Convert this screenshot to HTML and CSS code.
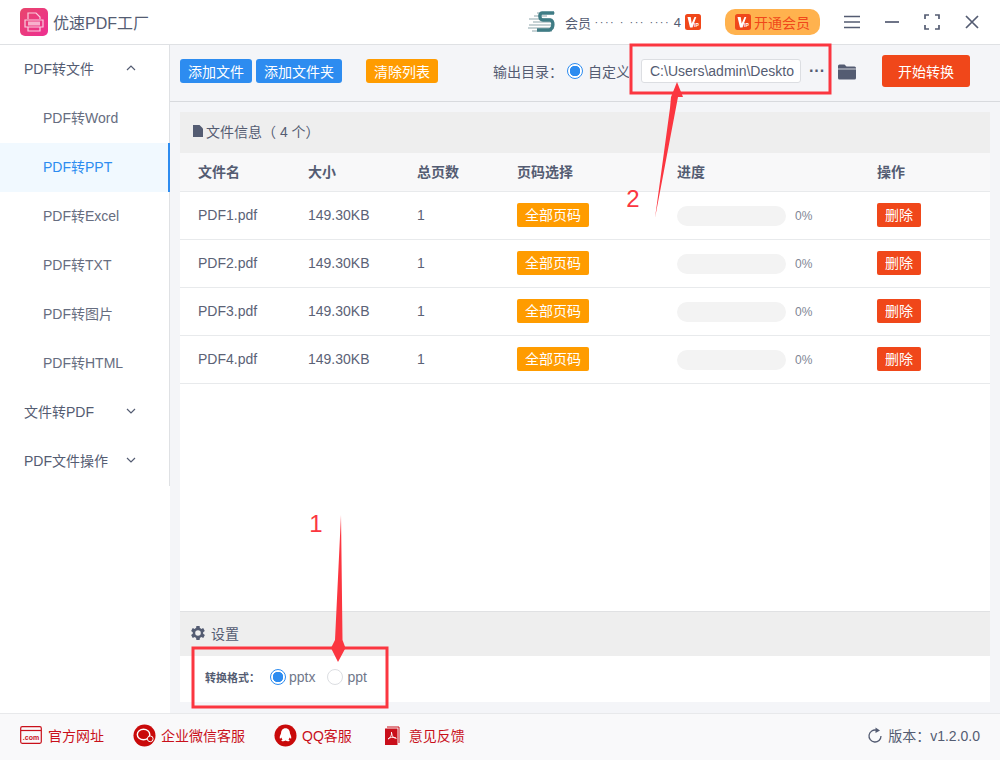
FILE: index.html
```html
<!DOCTYPE html>
<html lang="zh">
<head>
<meta charset="utf-8">
<title>优速PDF工厂</title>
<link rel="stylesheet" href="styles.css">
</head>
<body>
<div class="app">
  <header class="titlebar">
    <div class="brand">
      <svg class="logo" viewBox="0 0 28 28"><defs><linearGradient id="lg" x1="0" y1="0" x2="1" y2="1"><stop offset="0" stop-color="#e8456c"/><stop offset="1" stop-color="#ee2f92"/></linearGradient></defs><rect width="28" height="28" rx="5" fill="url(#lg)"/><path d="M8 11V5h8l4 4v2M5 12h18v7H5zM8 19v4h12v-4" fill="none" stroke="#fff" stroke-opacity=".75" stroke-width="1.2"/><rect x="8" y="13.5" width="12" height="4" fill="#fff" fill-opacity=".6"/></svg>
      <span class="brand-name">优速PDF工厂</span>
    </div>
    <div class="title-right">
      <svg class="avatar" viewBox="0 0 30 24"><path d="M10 3h18M7 6h13M2 9h22M6 12h20M2 15h24M1 18h26M5 21h20" stroke="#b4c4c8" stroke-width="1.6"/><path d="M27 3H15c-3 0-3 7 1 7h7c4 0 4 9-1 10H10" fill="none" stroke="#3f7c85" stroke-width="3.4"/></svg>
      <span class="member"><span>会员</span><span class="member-mask">···· · ··· ····</span><span>4</span></span>
      <svg class="vip-small" viewBox="0 0 16 16"><rect width="16" height="16" rx="2.5" fill="#f0471a"/><path d="M2.500 3h3.200l1 6.500L9.500 3h1.800L7.500 13.500H5z" fill="#fff"/><text x="9" y="13" class="vip-ip">IP</text></svg>
      <button class="vip-btn"><svg class="vip-small" viewBox="0 0 16 16"><rect width="16" height="16" rx="2.5" fill="#f0471a"/><path d="M2.500 3h3.200l1 6.500L9.500 3h1.800L7.500 13.500H5z" fill="#fff"/><text x="9" y="13" class="vip-ip">IP</text></svg>开通会员</button>
      <div class="win-icons">
        <svg viewBox="0 0 16 16"><path d="M0 2.500h16M0 8h16M0 13.500h16" stroke="#545c72" stroke-width="1.7"/></svg>
        <svg viewBox="0 0 16 16"><path d="M1 8h14" stroke="#545c72" stroke-width="1.7"/></svg>
        <svg viewBox="0 0 16 16"><path d="M1 5V1h4M11 1h4v4M15 11v4h-4M5 15H1v-4" fill="none" stroke="#545c72" stroke-width="1.7"/></svg>
        <svg viewBox="0 0 16 16"><path d="M2 2l12 12M14 2L2 14" stroke="#545c72" stroke-width="1.7"/></svg>
      </div>
    </div>
  </header>
  <div class="body">
    <nav class="sidebar">
      <div class="nav-group"><span>PDF转文件</span><svg class="chev" viewBox="0 0 10 6"><path d="M1 5l4-4 4 4" fill="none" stroke="#545c72" stroke-width="1.2"/></svg></div>
      <div class="nav-item">PDF转Word</div>
      <div class="nav-item active">PDF转PPT</div>
      <div class="nav-item">PDF转Excel</div>
      <div class="nav-item">PDF转TXT</div>
      <div class="nav-item">PDF转图片</div>
      <div class="nav-item">PDF转HTML</div>
      <div class="nav-group"><span>文件转PDF</span><svg class="chev" viewBox="0 0 10 6"><path d="M1 1l4 4 4-4" fill="none" stroke="#545c72" stroke-width="1.2"/></svg></div>
      <div class="nav-group"><span>PDF文件操作</span><svg class="chev" viewBox="0 0 10 6"><path d="M1 1l4 4 4-4" fill="none" stroke="#545c72" stroke-width="1.2"/></svg></div>
    </nav>
    <main class="main">
      <div class="toolbar">
        <div class="tool-left">
          <button class="btn blue">添加文件</button>
          <button class="btn blue">添加文件夹</button>
          <button class="btn amber clear">清除列表</button>
        </div>
        <div class="output">
          <span class="out-label">输出目录：</span>
          <span class="radio on"></span><span class="out-custom">自定义</span>
          <span class="path">C:\Users\admin\Deskto</span>
          <span class="dots">···</span>
          <svg class="folder" viewBox="0 0 20 17"><path d="M1 3a1.500 1.500 0 0 1 1.500-1.500h5L9.500 3.500h8A1.500 1.500 0 0 1 19 5v10a1.500 1.500 0 0 1-1.500 1.500h-15A1.500 1.500 0 0 1 1 15z" fill="#545c72"/><path d="M1 6h18" stroke="#f4f5f8" stroke-width=".8"/></svg>
          <button class="start">开始转换</button>
        </div>
      </div>
      <div class="content">
        <section class="panel">
          <div class="panel-head"><svg class="doc" viewBox="0 0 10 12"><path d="M0 0h6.500L10 3.500V12H0z" fill="#545c72"/></svg>文件信息（ 4 个）</div>
          <div class="row th"><span>文件名</span><span>大小</span><span>总页数</span><span>页码选择</span><span>进度</span><span>操作</span></div>
          <div class="row"><span>PDF1.pdf</span><span>149.30KB</span><span>1</span><span><button class="tag amber">全部页码</button></span><span class="prog"><i class="bar"></i><em>0%</em></span><span><button class="tag red">删除</button></span></div>
          <div class="row"><span>PDF2.pdf</span><span>149.30KB</span><span>1</span><span><button class="tag amber">全部页码</button></span><span class="prog"><i class="bar"></i><em>0%</em></span><span><button class="tag red">删除</button></span></div>
          <div class="row"><span>PDF3.pdf</span><span>149.30KB</span><span>1</span><span><button class="tag amber">全部页码</button></span><span class="prog"><i class="bar"></i><em>0%</em></span><span><button class="tag red">删除</button></span></div>
          <div class="row"><span>PDF4.pdf</span><span>149.30KB</span><span>1</span><span><button class="tag amber">全部页码</button></span><span class="prog"><i class="bar"></i><em>0%</em></span><span><button class="tag red">删除</button></span></div>
        </section>
        <section class="settings">
          <div class="set-head"><svg class="gear" viewBox="3 2 20 20"><path fill="#545c72" d="M19.400 13a7.600 7.600 0 0 0 0-2l2.100-1.600-2-3.500-2.500 1a7.500 7.500 0 0 0-1.700-1L15 3.300h-4l-.4 2.600a7.500 7.500 0 0 0-1.700 1l-2.500-1-2 3.500L6.500 11a7.600 7.600 0 0 0 0 2l-2.100 1.600 2 3.500 2.500-1a7.500 7.500 0 0 0 1.700 1l.4 2.600h4l.4-2.600a7.500 7.500 0 0 0 1.700-1l2.500 1 2-3.500zM13 15.500a3.500 3.500 0 1 1 0-7 3.500 3.500 0 0 1 0 7z"/></svg>设置</div>
          <div class="set-body">
            <span class="set-label">转换格式：</span>
            <span class="radio on"></span><span class="opt">pptx</span>
            <span class="radio"></span><span class="opt">ppt</span>
          </div>
        </section>
      </div>
    </main>
  </div>
  <footer class="footer">
    <div class="links">
      <a class="link link-com"><svg class="ic-com" viewBox="0 0 22 18"><rect x=".7" y=".7" width="20.600" height="16.600" rx="1.500" fill="none" stroke="#c9101a" stroke-width="1.200"/><path d="M1 4.500h20" stroke="#c9101a" stroke-width="1.200"/><text x="11" y="14" text-anchor="middle" class="com-text">.com</text></svg>官方网址</a>
      <a class="link"><svg class="ic-round" viewBox="0 0 24 24"><circle cx="12" cy="12" r="11.500" fill="#c90a0a"/><ellipse cx="11" cy="11" rx="6.500" ry="5.500" fill="none" stroke="#fff" stroke-width="1.500"/><circle cx="18" cy="15.500" r="3" fill="#c90a0a" stroke="#fff"/></svg>企业微信客服</a>
      <a class="link"><svg class="ic-round" viewBox="0 0 24 24"><circle cx="12" cy="12" r="11.500" fill="#c90a0a"/><path d="M12 4.500c3 0 4.600 2.400 4.600 5 0 1 1.900 3.800 1.400 5.300-.4.900-1.400-.4-1.700-.8-.2 1-.8 1.800-1.300 2.300 1 .4 1.700.9 1 1.400-1 .5-3.100.3-4-.4-.9.700-3 .9-4 .4-.7-.5 0-1 1-1.400-.5-.5-1.100-1.300-1.300-2.300-.3.400-1.300 1.700-1.700.8-.5-1.500 1.400-4.300 1.400-5.300 0-2.600 1.600-5 4.600-5z" fill="#fff"/></svg>QQ客服</a>
      <a class="link link-pdf"><svg class="ic-pdf" viewBox="0 0 16 20"><path d="M2 2h12v16" fill="none" stroke="#c9101a"/><path d="M0 3.500h12.500V20H0z" fill="#c90f1b"/><path d="M6 7c1 0 .5 3 2 5 1 1 3 1 3.500 1.500M6.500 7c.5 3-1 6-3.500 7M3 14c2-2 5-2 8-1" fill="none" stroke="#fff" stroke-width=".9"/></svg>意见反馈</a>
    </div>
    <div class="version"><svg class="refresh" viewBox="0 0 16 16"><path d="M9.500 3.200A6 6 0 1 0 14 9" fill="none" stroke="#545c72" stroke-width="1.300"/><path d="M8.500 .5l4.500 3-4.500 2.500z" fill="#545c72"/></svg>版本：v1.2.0.0</div>
  </footer>
  <svg class="annot" viewBox="0 0 1000 760" aria-hidden="true">
    <rect x="631" y="45" width="199" height="48" fill="none" stroke="#fb3640" stroke-width="3"/>
    <rect x="193" y="648" width="194" height="59" fill="none" stroke="#fb3640" stroke-width="3"/>
    <path d="M341 515 L342.500 640 L345.500 648 L338 662 L331 648 L335 640 Z" fill="#fb3640"/>
    <path d="M655 218 L670 108 L671 97 L677 82 L683 97 L678 97 Z" fill="#fb3640"/>
    <text x="316" y="532" class="num">1</text>
    <text x="633" y="207" class="num">2</text>
  </svg>
</div>
</body>
</html>
```
FILE: styles.css
```css
* { box-sizing: border-box; }
html, body { margin: 0; padding: 0; }
body { width: 1000px; height: 760px; overflow: hidden; font-family: "Liberation Sans", "Noto Sans CJK SC", sans-serif; color: #545c72; background: #fff; }
button { font-family: inherit; border: 0; padding: 0; color: #fff; }
.app { position: relative; width: 1000px; height: 760px; display: flex; flex-direction: column; }

.titlebar { height: 45px; flex: none; border-bottom: 1px solid #dfe1e4; display: flex; justify-content: space-between; align-items: center; padding: 0 20px; background: #fff; }
.brand { display: flex; align-items: center; gap: 5px; }
.logo { width: 28px; height: 28px; }
.brand-name { font-size: 16px; color: #545c72; }
.title-right { display: flex; align-items: center; }
.avatar { width: 30px; height: 24px; margin-right: 8px; }
.member { font-size: 13px; color: #545c72; width: 116px; white-space: nowrap; display: flex; align-items: center; justify-content: space-between; }
.member-mask { color: #545c72; font-size: 11px; letter-spacing: 1.500px; }
.vip-small { width: 16px; height: 16px; flex: none; }
.vip-ip { font-family: "Liberation Sans", sans-serif; font-size: 5px; font-weight: 700; fill: #fff; }
.member + .vip-small { margin-left: 4px; margin-right: 24px; }
.vip-btn { width: 95px; height: 26px; border-radius: 10px; background: #ffb24e; color: #f0471a; font-size: 14px; display: flex; align-items: center; justify-content: center; gap: 3px; }
.win-icons { display: flex; align-items: center; gap: 24px; margin-left: 24px; }
.win-icons svg { width: 16px; height: 16px; display: block; }

.body { flex: 1; display: flex; min-height: 0; }
.sidebar { width: 170px; flex: none; background: #fff; height: 441px; border-right: 1px solid #dfe1e4; }
.nav-group { height: 49px; display: flex; align-items: center; justify-content: space-between; padding: 0 33px 4px 24px; font-size: 14px; color: #545c72; }
.chev { width: 10px; height: 6px; }
.nav-item { height: 49px; display: flex; align-items: center; padding: 0 0 4px 43px; font-size: 14px; color: #666d80; }
.nav-item.active { color: #2d8cf0; background: #f1f9ff; border-right: 2px solid #2d8cf0; margin-right: -1px; }

.main { flex: 1; min-width: 0; display: flex; flex-direction: column; background: #f4f5f8; }
.toolbar { height: 57px; flex: none; border-bottom: 1px solid #d8dade; display: flex; align-items: center; justify-content: space-between; padding: 0 30px 4px 10px; }
.tool-left { display: flex; align-items: center; gap: 4px; }
.btn { height: 24px; border-radius: 3px; font-size: 14px; padding: 0 8px; }
.blue { background: #2d8cf0; }
.amber { background: #ff9c00; }
.btn.clear { margin-left: 20px; }
.output { display: flex; align-items: center; height: 34px; }
.out-label { font-size: 14px; color: #545c72; margin-right: 4px; }
.radio { width: 16px; height: 16px; border-radius: 50%; border: 1px solid #dcdee2; background: #fff; flex: none; display: inline-block; }
.radio.on { border-color: #2d8cf0; background: radial-gradient(circle, #2d8cf0 0, #2d8cf0 5px, #fff 5.500px); }
.out-custom { font-size: 14px; margin-left: 5px; width: 41px; overflow: hidden; white-space: nowrap; }
.path { width: 160px; height: 24px; margin-left: 12px; border: 1px solid #dcdee2; border-radius: 3px; background: #fff; font-size: 14px; padding-left: 8px; line-height: 22px; overflow: hidden; white-space: nowrap; color: #545c72; }
.dots { width: 16px; margin-left: 8px; font-size: 16px; font-weight: 700; line-height: 1; text-align: center; }
.folder { width: 20px; height: 17px; margin-left: 12px; }
.start { width: 88px; height: 32px; margin-left: 25px; border-radius: 3px; background: #f0471a; font-size: 14px; }

.content { flex: 1; min-height: 0; display: flex; flex-direction: column; padding: 10px 10px 11px; }
.panel { flex: 1; background: #fff; }
.panel-head { height: 41px; background: #eee; display: flex; align-items: center; padding: 0 0 4px 13px; font-size: 14px; color: #545c72; }
.doc { width: 10px; height: 12px; margin-right: 3px; }
.row { display: grid; grid-template-columns: 110px 109px 100px 160px 200px 1fr; height: 48px; padding: 0 0 2px 18px; align-items: center; border-bottom: 1px solid #e8eaec; font-size: 14px; color: #5b6276; }
.row.th { height: 39px; background: #f8f8f9; font-weight: 700; color: #545c72; }
.tag { height: 24px; border-radius: 2px; font-size: 14px; display: block; padding-bottom: 2px; }
.tag.amber { width: 72px; }
.tag.red { width: 44px; background: #f0471a; }
.prog { display: flex; align-items: center; gap: 9px; margin-top: 2px; }
.bar { width: 109px; height: 20px; border-radius: 10px; background: #f3f3f3; display: block; }
.prog em { font-style: normal; font-size: 12px; color: #808695; }

.settings { flex: none; height: 91px; background: #fff; }
.set-head { height: 45px; background: #eee; border-top: 1px solid #e0e1e3; display: flex; align-items: center; padding: 0 0 3px 10px; font-size: 14px; gap: 5px; }
.gear { width: 16px; height: 16px; }
.set-body { height: 46px; display: flex; align-items: center; padding: 0 0 4px 25px; font-size: 12px; }
.set-label { font-weight: 700; font-size: 11px; margin-right: 5px; width: 60px; }
.set-body .radio { margin-right: 3px; }
.set-body .opt + .radio { margin-right: 4px; }
.opt { font-size: 14px; color: #70778a; margin-right: 12px; }

.footer { height: 47px; flex: none; background: #f9f9fa; border-top: 1px solid #e8e9eb; display: flex; align-items: center; justify-content: space-between; padding: 0 20px 4px; }
.links { display: flex; align-items: center; gap: 29px; }
.link { display: flex; align-items: center; gap: 5px; font-size: 14px; color: #c9101a; }
.link-com { gap: 6px; }
.link-pdf { gap: 8px; margin-left: 4px; }
.ic-com { width: 22px; height: 18px; }
.com-text { font-family: "Liberation Sans", sans-serif; font-size: 7px; font-weight: 700; fill: #c9101a; }
.ic-round { width: 23px; height: 23px; }
.ic-pdf { width: 16px; height: 20px; }
.version { display: flex; align-items: center; gap: 5px; font-size: 14px; color: #545c72; }
.refresh { width: 16px; height: 16px; }

.annot { position: absolute; left: 0; top: 0; width: 1000px; height: 760px; pointer-events: none; }
.num { font-family: "Liberation Sans", sans-serif; font-size: 24px; fill: #fb3640; text-anchor: middle; }
```
